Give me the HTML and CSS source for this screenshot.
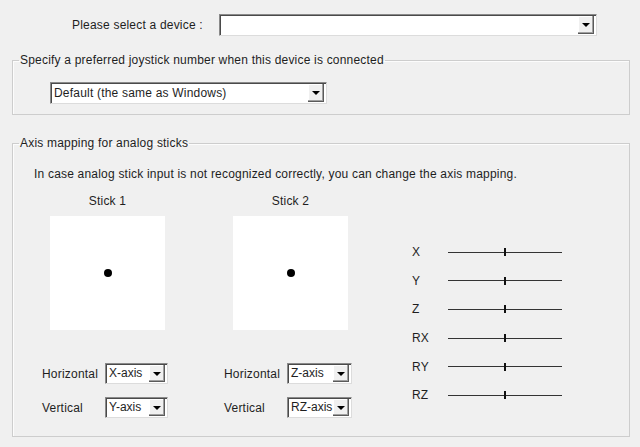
FILE: index.html
```html
<!DOCTYPE html>
<html>
<head>
<meta charset="utf-8">
<link rel="stylesheet" href="styles.css">
</head>
<body>
<div class="device-row">
  <span class="device-label">Please select a device :</span>
  <div class="combo combo-device"><span class="combo-text"></span><span class="combo-btn"><i class="arrow"></i></span></div>
</div>

<fieldset class="group group-joy">
  <legend>Specify a preferred joystick number when this device is connected</legend>
  <div class="combo combo-joy"><span class="combo-text">Default (the same as Windows)</span><span class="combo-btn"><i class="arrow"></i></span></div>
</fieldset>

<fieldset class="group group-axis">
  <legend>Axis mapping for analog sticks</legend>
  <p class="desc">In case analog stick input is not recognized correctly, you can change the axis mapping.</p>
  <div class="axis-area">
    <div class="stick">
      <div class="stick-title">Stick 1</div>
      <div class="pad"><span class="dot"></span></div>
      <div class="map-row">
        <span class="map-label">Horizontal</span>
        <div class="combo combo-small"><span class="combo-text">X-axis</span><span class="combo-btn"><i class="arrow"></i></span></div>
      </div>
      <div class="map-row map-row-v">
        <span class="map-label">Vertical</span>
        <div class="combo combo-small"><span class="combo-text">Y-axis</span><span class="combo-btn"><i class="arrow"></i></span></div>
      </div>
    </div>
    <div class="stick stick-2">
      <div class="stick-title">Stick 2</div>
      <div class="pad"><span class="dot"></span></div>
      <div class="map-row">
        <span class="map-label">Horizontal</span>
        <div class="combo combo-small combo-wide"><span class="combo-text">Z-axis</span><span class="combo-btn"><i class="arrow"></i></span></div>
      </div>
      <div class="map-row map-row-v">
        <span class="map-label">Vertical</span>
        <div class="combo combo-small combo-wide"><span class="combo-text">RZ-axis</span><span class="combo-btn"><i class="arrow"></i></span></div>
      </div>
    </div>
    <div class="sliders">
      <div class="slider-row"><span class="axis-name">X</span><span class="track"><span class="thumb"></span></span></div>
      <div class="slider-row"><span class="axis-name">Y</span><span class="track"><span class="thumb"></span></span></div>
      <div class="slider-row"><span class="axis-name">Z</span><span class="track"><span class="thumb"></span></span></div>
      <div class="slider-row"><span class="axis-name">RX</span><span class="track"><span class="thumb"></span></span></div>
      <div class="slider-row"><span class="axis-name">RY</span><span class="track"><span class="thumb"></span></span></div>
      <div class="slider-row"><span class="axis-name">RZ</span><span class="track"><span class="thumb"></span></span></div>
    </div>
  </div>
</fieldset>
</body>
</html>
```

FILE: styles.css
```css
* { box-sizing: border-box; }
html, body { margin: 0; padding: 0; }
body {
  width: 640px;
  height: 447px;
  background: #f0f0f0;
  font-family: "Liberation Sans", "DejaVu Sans", sans-serif;
  font-size: 12px;
  letter-spacing: 0.2px;
  line-height: 14px;
  color: #1e1e1e;
  padding-top: 14px;
  overflow: hidden;
}

/* top row */
.device-row {
  display: flex;
  align-items: center;
  padding-left: 72px;
}
.device-label { width: 147px; }

/* combos */
.combo {
  display: flex;
  height: 22px;
  background: #fff;
  border-top: 1px solid #8a8a8a;
  border-left: 1px solid #8a8a8a;
  border-right: 1px solid #dcdcdc;
  border-bottom: 1px solid #dcdcdc;
  box-shadow: inset 1px 1px 0 #4a4a4a;
  padding: 1px 2px 1px 2px;
}
.combo-text {
  flex: 1;
  line-height: 18px;
  padding-left: 1px;
  white-space: nowrap;
  overflow: hidden;
}
.combo-btn {
  width: 16px;
  background: #f0f0f0;
  border-right: 1px solid #5a5a5a;
  border-bottom: 1px solid #5a5a5a;
  box-shadow: inset -1px -1px 0 #a0a0a0, inset 1px 1px 0 #fff;
  display: flex;
  align-items: center;
  justify-content: center;
}
.arrow {
  width: 0;
  height: 0;
  border-left: 4px solid transparent;
  border-right: 4px solid transparent;
  border-top: 4px solid #000;
  margin-top: 1px;
}
.combo-device { width: 378px; }
.combo-joy { width: 277px; margin: 15px 0 0 37px; }
.combo-small { width: 63px; height: 21px; }
.combo-wide { width: 66px; }
.combo-small .combo-text { line-height: 17px; letter-spacing: 0; }

/* groups */
.group {
  margin: 0 10px 0 12px;
  padding: 0;
  border: 1px solid #cdcdcd;
  box-shadow: inset 1px 1px 0 #fcfcfc;
  min-width: 0;
}
.group legend {
  margin-left: 6px;
  padding: 0 1px;
  line-height: 14px;
}
.group-joy { margin-top: 17px; padding-bottom: 10px; }
.group-axis { margin-top: 21px; padding-bottom: 18px; }

.desc {
  margin: 17px 0 0 21px;
}

.axis-area {
  display: flex;
  margin: 13px 0 0 29px;
}
.stick { width: 128px; flex: none; }
.stick-2 { margin-left: 54px; }
.stick-title {
  width: 115px;
  margin-left: 8px;
  text-align: center;
}
.stick-2 .stick-title,
.stick-2 .pad { margin-left: 9px; }
.pad {
  width: 115px;
  height: 114px;
  margin: 8px 0 0 8px;
  background: #fff;
  display: flex;
  align-items: center;
  justify-content: center;
}
.dot {
  width: 8px;
  height: 8px;
  border-radius: 50%;
  background: #000;
}
.map-row {
  display: flex;
  align-items: center;
  margin-top: 33px;
}
.map-row-v { margin-top: 13px; }
.map-label { width: 63px; flex: none; }

.sliders {
  margin: 44px 0 0 60px;
}
.slider-row {
  display: flex;
  align-items: center;
  height: 28.6px;
}
.axis-name { width: 36px; }
.track {
  width: 114px;
  height: 1px;
  background: #333;
  display: flex;
  justify-content: center;
  align-items: center;
}
.thumb {
  width: 2px;
  height: 8px;
  background: #111;
}
```
